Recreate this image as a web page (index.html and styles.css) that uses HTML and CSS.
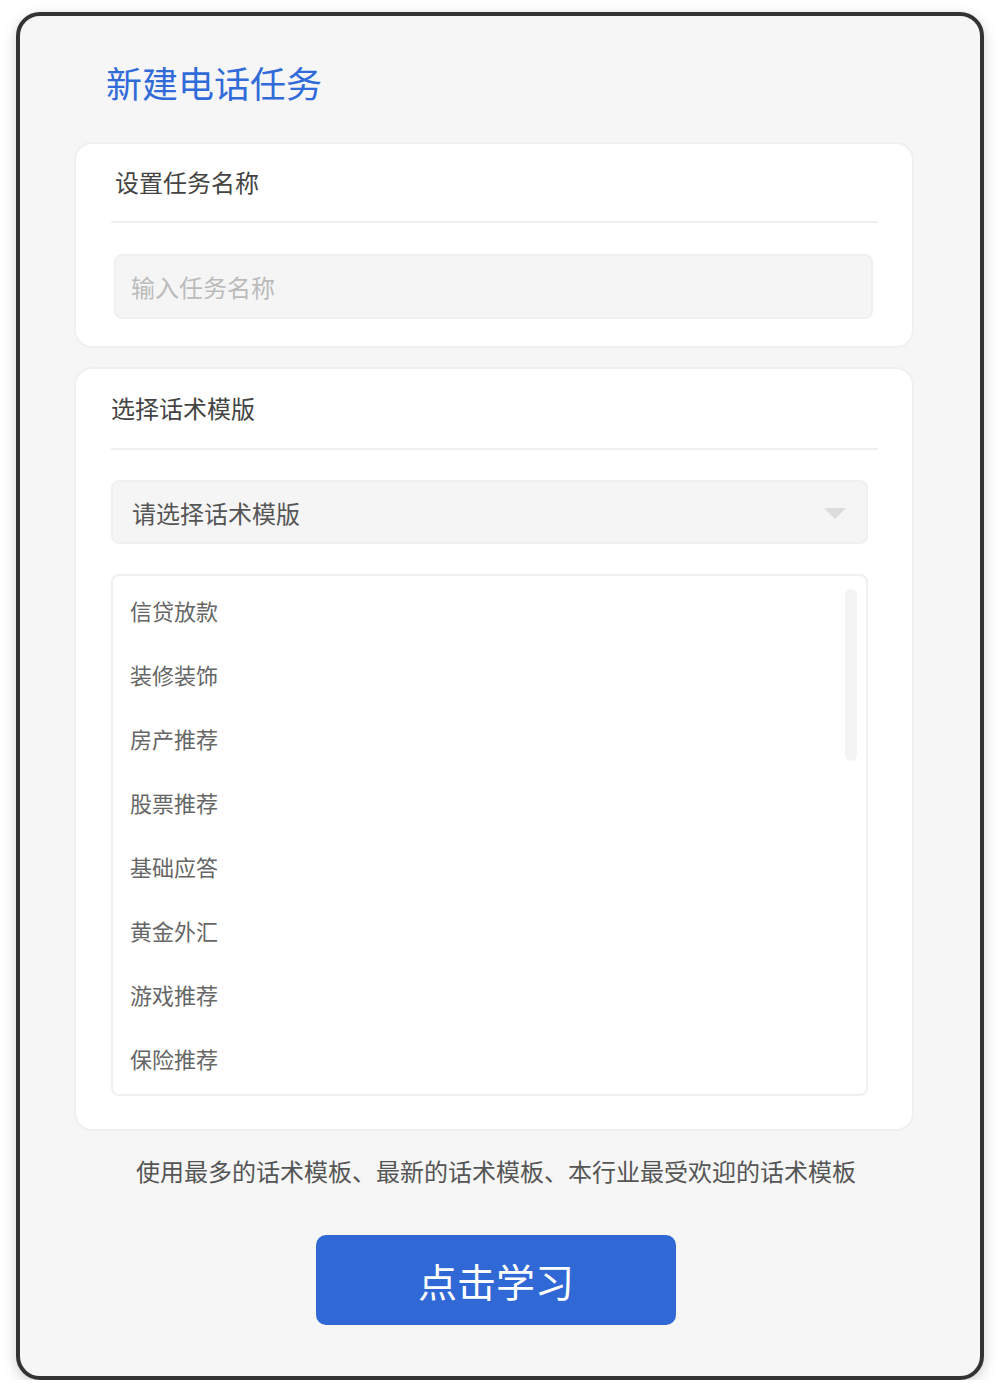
FILE: index.html
```html
<!DOCTYPE html>
<html lang="zh-CN">
<head>
    <meta charset="UTF-8">
    <meta name="viewport" content="width=device-width, initial-scale=1.0">
    <title>新建电话任务</title>
    <link rel="stylesheet" href="styles.css">
</head>
<body>
    <div class="frame">
        <h1 class="page-title">新建电话任务</h1>

        <!-- 任务名称 -->
        <div class="card">
            <div class="card-head card-head-name">设置任务名称</div>
            <div class="name-input">输入任务名称</div>
        </div>

        <!-- 话术模版 -->
        <div class="card card-template">
            <div class="card-head card-head-template">选择话术模版</div>
            <div class="select-box">
                <span>请选择话术模版</span>
                <span class="select-arrow"></span>
            </div>
            <div class="option-list">
                <div class="option">信贷放款</div>
                <div class="option">装修装饰</div>
                <div class="option">房产推荐</div>
                <div class="option">股票推荐</div>
                <div class="option">基础应答</div>
                <div class="option">黄金外汇</div>
                <div class="option">游戏推荐</div>
                <div class="option">保险推荐</div>
                <div class="scroll-thumb"></div>
            </div>
        </div>

        <p class="hint">使用最多的话术模板、最新的话术模板、本行业最受欢迎的话术模板</p>

        <div class="actions">
            <button class="learn-btn">点击学习</button>
        </div>
    </div>
</body>
</html>
```

FILE: styles.css
```css
body {
    margin: 0;
    background: #fff;
    font-family: "Noto Sans CJK SC", "Noto Sans", sans-serif;
}
.frame {
    margin: 12px 16px 0 16px;
    width: 960px;
    height: 1360px;
    border: 4px solid #333;
    border-radius: 24px;
    background: #f6f6f6;
    box-shadow: 0 4px 14px rgba(0, 0, 0, 0.18);
    overflow: hidden;
}
.page-title {
    margin: 42px 0 0 86px;
    font-size: 36px;
    line-height: 48px;
    font-weight: normal;
    color: #316bd9;
}
.card {
    margin: 36px 0 0 54px;
    width: 840px;
    box-sizing: border-box;
    background: #fff;
    border: 2px solid #f0f0f0;
    border-radius: 18px;
    padding: 0 34px 27px 35px;
}
.card-template {
    margin-top: 19px;
    padding-bottom: 33px;
}
.card-head {
    padding: 21px 0 22px 0;
    font-size: 24px;
    line-height: 34px;
    color: #444;
    border-bottom: 2px solid #f0f0f0;
}
.card-head-name {
    padding-left: 4px;
}
.card-head-template {
    padding: 22px 0 23px 0;
}
.name-input {
    margin: 31px 5px 0 3px;
    height: 61px;
    border: 2px solid #f0f0f0;
    border-radius: 8px;
    background: #f5f5f5;
    padding-left: 15px;
    font-size: 24px;
    line-height: 61px;
    color: #bbb;
}
.select-box {
    margin: 30px 10px 0 0;
    height: 60px;
    border: 2px solid #f0f0f0;
    border-radius: 8px;
    background: #f5f5f5;
    padding: 0 20px 0 19px;
    display: flex;
    align-items: center;
    justify-content: space-between;
    font-size: 24px;
    color: #555;
}
.select-arrow {
    width: 0;
    height: 0;
    border-left: 11px solid transparent;
    border-right: 11px solid transparent;
    border-top: 11px solid #dcdcdc;
    margin-top: 2px;
}
.option-list {
    position: relative;
    margin: 30px 10px 0 0;
    border: 2px solid #f0f0f0;
    border-radius: 8px;
    padding: 2px 0 4px 0;
}
.option {
    height: 64px;
    line-height: 64px;
    padding-left: 17px;
    font-size: 22px;
    color: #666;
}
.scroll-thumb {
    position: absolute;
    top: 13px;
    right: 9px;
    width: 12px;
    height: 172px;
    border-radius: 6px;
    background: #f4f4f4;
}
.hint {
    margin: 23px 0 0 0;
    text-align: center;
    font-size: 24px;
    line-height: 34px;
    color: #555;
    padding-right: 8px;
}
.actions {
    display: flex;
    justify-content: center;
    margin-top: 47px;
    padding-right: 8px;
}
.learn-btn {
    width: 360px;
    height: 90px;
    border: none;
    border-radius: 10px;
    background: #3068d6;
    color: #fff;
    font-family: inherit;
    font-size: 39px;
    cursor: pointer;
}
```
